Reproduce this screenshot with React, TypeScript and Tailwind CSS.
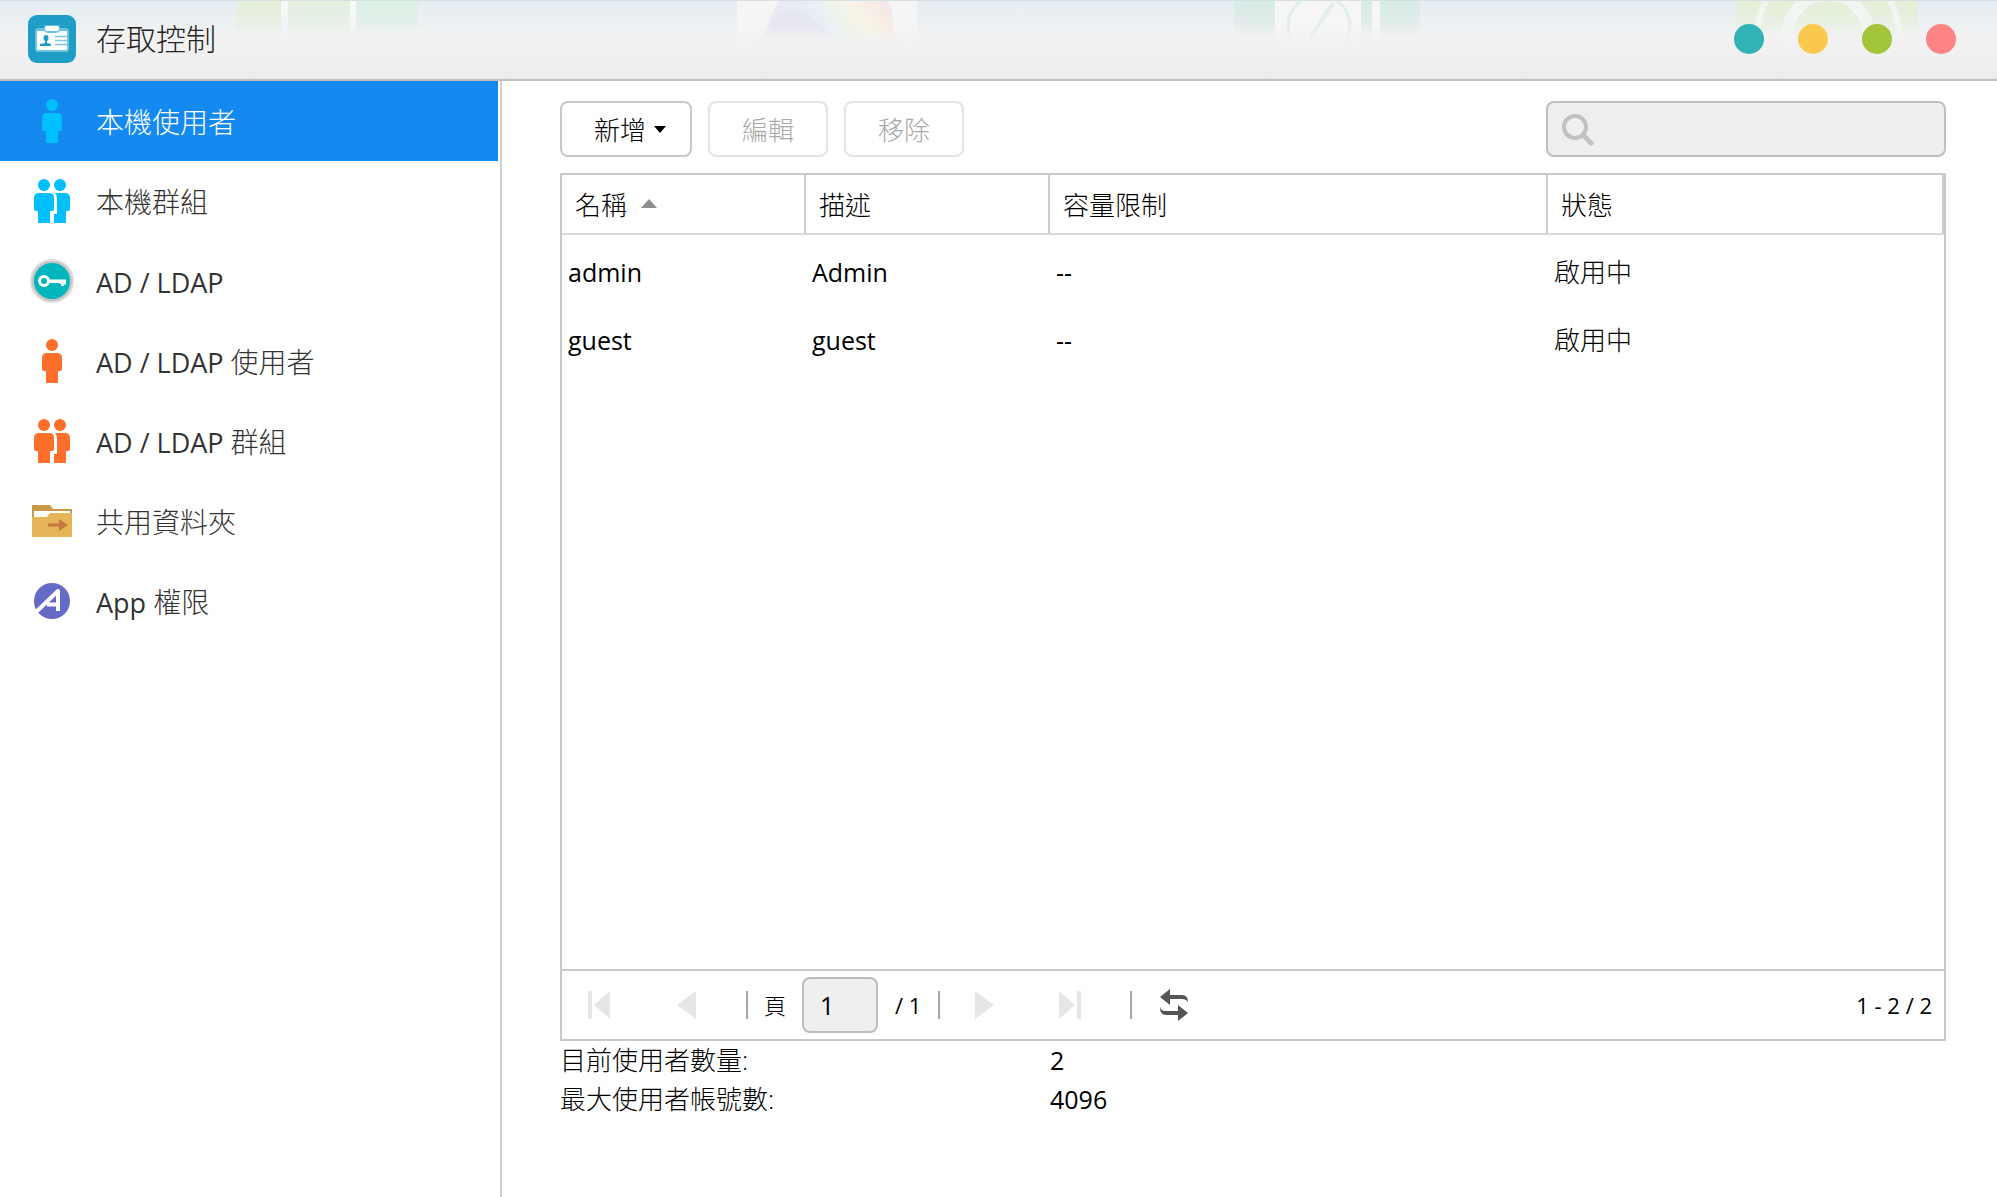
import React from "react";

type IconProps = { color?: string };

function PersonIcon({ color = "#00bfff" }: IconProps) {
  return (
    <svg viewBox="0 0 48 48" className="size-12 shrink-0" fill={color} aria-hidden="true">
      <circle cx="24" cy="8" r="6" />
      <path d="M19 16H29Q34 16 34 21V32Q34 34 31 34H30V46H18V34H17Q14 34 14 32V21Q14 16 19 16Z" />
    </svg>
  );
}

function GroupIcon({ color = "#00bfff" }: IconProps) {
  return (
    <svg viewBox="0 0 48 48" className="size-12 shrink-0" fill={color} aria-hidden="true">
      <circle cx="16" cy="8" r="6" />
      <circle cx="32" cy="8" r="6" />
      <path d="M11 16H21Q26 16 26 21V32Q26 34 23 34H22V46H10V34H9Q6 34 6 32V21Q6 16 11 16Z" />
      <path d="M27 16H37Q42 16 42 21V32Q42 34 39 34H38V46H26V37H29V21Q29 18 27 16Z" />
    </svg>
  );
}

function KeyIcon() {
  return (
    <svg viewBox="0 0 48 48" className="size-12 shrink-0" aria-hidden="true">
      <circle cx="24" cy="24" r="22" fill="#dcdcdc" />
      <circle cx="24" cy="24" r="20" fill="#c3c3c3" />
      <circle cx="24" cy="24" r="18" fill="#00b6bd" />
      <circle cx="16" cy="24" r="4.5" fill="none" stroke="#fff" strokeWidth="3" />
      <path d="M20 22.5H38V27.5H36V29H33V27L31 26H20Z" fill="#fff" />
    </svg>
  );
}

function FolderIcon() {
  return (
    <svg viewBox="0 0 48 48" className="size-12 shrink-0" aria-hidden="true">
      <path d="M4 8H22L25 12H44V20H4Z" fill="#c99a45" />
      <path d="M6 14H42V22H6Z" fill="#fff" />
      <path d="M4 20H18Q19 20 20 18.500L21 17Q22 16 23 16H44V40H4Z" fill="#e6b557" />
      <path d="M20 26.500H31V22L40 28L31 34V29.500H20Z" fill="#c57a45" />
    </svg>
  );
}

function AppIcon() {
  return (
    <svg viewBox="0 0 48 48" className="size-12 shrink-0" aria-hidden="true">
      <circle cx="24" cy="24" r="18" fill="#656ac6" />
      <path d="M8 35L30 14V34M19 27.500H30" fill="none" stroke="#fff" strokeWidth="4" strokeLinejoin="round" />
    </svg>
  );
}

function BadgeIcon() {
  return (
    <svg viewBox="0 0 48 48" className="size-12 shrink-0" aria-hidden="true">
      <rect width="48" height="48" rx="9" fill="#1e9dc6" />
      <rect x="7" y="13" width="34" height="24" rx="3" fill="#6cc3de" />
      <rect x="16" y="10" width="16" height="7" rx="2" fill="#6cc3de" />
      <path d="M9 16H16Q18 18 20 18H28Q30 18 32 16H39V35H9Z" fill="#fff" />
      <rect x="17" y="11" width="14" height="5" rx="2" fill="#fff" />
      <ellipse cx="18" cy="23" rx="2.500" ry="3" fill="#1e9dc6" />
      <path d="M17 25H19V28L23 29V31H12V29L17 28Z" fill="#1e9dc6" />
      <path d="M27 21.500H39M27 25.500H39M27 29.500H39" stroke="#7cc6de" strokeWidth="1.500" />
    </svg>
  );
}

function HeaderBackdrop() {
  return (
    <svg
      viewBox="0 0 1997 79"
      preserveAspectRatio="xMidYMin slice"
      className="absolute inset-0 size-full"
      aria-hidden="true"
    >
      <defs>
        <linearGradient id="fade" x1="0" y1="0" x2="0" y2="1">
          <stop offset="0" stopColor="#fff" />
          <stop offset="0.300" stopColor="#ccc" />
          <stop offset="1" stopColor="#000" />
        </linearGradient>
        <mask id="fadeMask" maskUnits="userSpaceOnUse" x="0" y="0" width="1997" height="40">
          <rect width="1997" height="40" fill="url(#fade)" />
        </mask>
        <linearGradient id="rainbow" gradientUnits="userSpaceOnUse" x1="805" y1="40" x2="880" y2="-10">
          <stop offset="0" stopColor="#e6e6f2" />
          <stop offset="0.250" stopColor="#e0ecf8" />
          <stop offset="0.450" stopColor="#eaf3e8" />
          <stop offset="0.650" stopColor="#f8f3e0" />
          <stop offset="0.850" stopColor="#f8e8e0" />
          <stop offset="1" stopColor="#f5e0e2" />
        </linearGradient>
      </defs>
      <g mask="url(#fadeMask)">
        <rect x="237" width="44" height="40" fill="#e5efd8" />
        <rect x="288" width="62" height="40" fill="#e4f0de" />
        <rect x="356" width="62" height="40" fill="#dcf0e4" />
        <rect x="281" width="7" height="40" fill="#f8fafa" />
        <rect x="350" width="6" height="40" fill="#f8fafa" />
        <rect x="1234" width="186" height="40" fill="#d8ebe5" />
        <rect x="1736" width="182" height="40" fill="#e3f0d5" />
      </g>
      <rect x="737" width="180" height="50" fill="#f5f5f5" />
      <path d="M780 0H888Q894 15 893 34L898 38V46H758V36H764Q770 14 780 0Z" fill="url(#rainbow)" opacity="0.700" />
      <path d="M766 40Q775 5 798 10Q812 14 842 46H758Z" fill="#e6e5ee" opacity="0.700" />
      <rect x="758" y="36" width="140" height="10" fill="#ededed" opacity="0.700" />
      <rect x="1275" width="86" height="50" fill="#f6f6f6" />
      <rect x="1372" width="8" height="50" fill="#f6f6f6" />
      <g fill="none" stroke="#e2eeea" strokeWidth="3">
        <circle cx="1319" cy="26" r="31" />
        <path d="M1310 38L1333 3" strokeWidth="4" />
      </g>
      <g fill="none" stroke="#f3f5f2">
        <circle cx="1828" cy="36" r="41" strokeWidth="12" />
        <circle cx="1828" cy="36" r="71" strokeWidth="6" />
      </g>
      <defs>
        <linearGradient id="bottomShade" x1="0" y1="0" x2="0" y2="1">
          <stop offset="0" stopColor="#f2f2f2" stopOpacity="0" />
          <stop offset="0.300" stopColor="#f2f2f2" />
          <stop offset="1" stopColor="#ececec" />
        </linearGradient>
      </defs>
      <rect y="26" width="1997" height="53" fill="url(#bottomShade)" />
      <rect width="1997" height="1" fill="#d4e0e2" />
    </svg>
  );
}

const navItems = [
  { latin: "", label: "本機使用者", icon: <PersonIcon />, active: true },
  { latin: "", label: "本機群組", icon: <GroupIcon /> },
  { latin: "AD / LDAP", label: "", icon: <KeyIcon /> },
  { latin: "AD / LDAP ", label: "使用者", icon: <PersonIcon color="#ff6f2c" /> },
  { latin: "AD / LDAP ", label: "群組", icon: <GroupIcon color="#ff6f2c" /> },
  { latin: "", label: "共用資料夾", icon: <FolderIcon /> },
  { latin: "App ", label: "權限", icon: <AppIcon /> },
];

const windowButtons = [
  { label: "說明", color: "bg-[#30b3b5]" },
  { label: "最小化", color: "bg-[#fbc84f]" },
  { label: "最大化", color: "bg-[#a2c43a]" },
  { label: "關閉", color: "bg-[#fd8384]" },
];

const users = [
  { name: "admin", description: "Admin", quota: "--", status: "啟用中" },
  { name: "guest", description: "guest", quota: "--", status: "啟用中" },
];

function PagerButton({ label, disabled, children }: { label: string; disabled?: boolean; children: React.ReactNode }) {
  return (
    <button type="button" aria-label={label} disabled={disabled} className="flex size-12 items-center justify-center">
      <svg viewBox="0 0 32 32" className="size-8" fill={disabled ? "#e6e6e6" : "#555"} aria-hidden="true">
        {children}
      </svg>
    </button>
  );
}

function Separator() {
  return <span className="h-7 w-0.5 bg-[#a9a79c]" />;
}

export default function App() {
  return (
    <div className="flex min-h-screen flex-col bg-white font-['Open_Sans','Noto_Sans_CJK_TC',sans-serif] text-[25px] font-normal text-black">
      <header className="relative flex h-[81px] shrink-0 items-center justify-between border-b-2 border-[#c0c0c0] bg-linear-to-b from-[#e5edf2] via-[#f2f2f2] to-[#ececec] pr-[41px] pb-0.5 pl-7">
        <HeaderBackdrop />
        <div className="relative flex items-center gap-5">
          <BadgeIcon />
          <h1 className="text-[30px] leading-10 font-light text-[#222]">存取控制</h1>
        </div>
        <div className="relative flex gap-[34px]">
          {windowButtons.map((b) => (
            <button key={b.label} type="button" aria-label={b.label} className={`size-[30px] rounded-full ${b.color}`} />
          ))}
        </div>
      </header>

      <div className="flex flex-1">
        <nav className="w-[502px] shrink-0 border-r-2 border-[#cfcfcf] pr-0.5">
          <ul>
            {navItems.map((item) => (
              <li key={item.latin + item.label}>
                <a
                  href="#"
                  aria-current={item.active ? "page" : undefined}
                  className={`flex h-20 items-center gap-5 pl-7 text-[28px] leading-10 font-light ${
                    item.active ? "bg-[#148af0] text-white" : "text-[#333]"
                  }`}
                >
                  {item.icon}
                  <span className="pt-0.5 whitespace-pre">
                    {item.latin && <span className="text-[27px] font-normal">{item.latin}</span>}
                    {item.label}
                  </span>
                </a>
              </li>
            ))}
          </ul>
        </nav>

        <main className="flex min-w-0 flex-1 flex-col pt-5 pr-[51px] pb-[78px] pl-[58px]">
          <div className="flex items-center gap-4">
            <button
              type="button"
              className="flex h-14 w-[132px] items-center justify-center gap-2 rounded-lg border-2 border-[#c8c8c8] pt-0.5 pl-2 text-[26px] font-light"
            >
              新增
              <svg viewBox="0 0 12 8" className="h-2 w-3" aria-hidden="true">
                <path d="M0 0H12L6 7Z" />
              </svg>
            </button>
            <button type="button" disabled className="h-14 w-[120px] rounded-lg border-2 border-[#e4e4e4] pt-0.5 text-[26px] font-light text-[#a8a8a8]">
              編輯
            </button>
            <button type="button" disabled className="h-14 w-[120px] rounded-lg border-2 border-[#e4e4e4] pt-0.5 text-[26px] font-light text-[#a8a8a8]">
              移除
            </button>
            <label className="ml-auto flex h-14 w-[400px] items-center rounded-lg border-2 border-[#bfbfbf] bg-[#efefef] pt-0.5 pl-3.5">
              <svg viewBox="0 0 32 32" className="size-8 shrink-0" fill="none" stroke="#bfc3c6" aria-hidden="true">
                <circle cx="13" cy="13" r="11" strokeWidth="4" />
                <path d="M22 22L29 29" strokeWidth="5" strokeLinecap="round" />
              </svg>
              <input type="search" aria-label="搜尋" className="min-w-0 flex-1 px-2 outline-none" />
            </label>
          </div>

          <section className="mt-4 flex flex-1 flex-col border-2 border-[#c9c9c9]">
            <div className="flex-1">
              <table className="w-full table-fixed border-separate border-spacing-0 text-left">
                <colgroup>
                  <col className="w-[244px]" />
                  <col className="w-[244px]" />
                  <col className="w-[498px]" />
                  <col />
                </colgroup>
                <thead>
                  <tr className="h-[60px] text-[26px] leading-9 *:border-r-2 *:border-b-2 *:border-[#cdcdcd] *:border-b-[#dadada] *:px-[13px] *:pt-0.5 *:font-light">
                    <th scope="col" aria-sort="ascending">
                      <div className="flex items-center gap-3.5">
                        名稱
                        <svg viewBox="0 0 16 9" className="mb-1 h-[9px] w-4" fill="#8e8e8e" aria-hidden="true">
                          <path d="M0 9L8 0L16 9Z" />
                        </svg>
                      </div>
                    </th>
                    <th scope="col">描述</th>
                    <th scope="col">容量限制</th>
                    <th scope="col">狀態</th>
                  </tr>
                </thead>
                <tbody>
                  {users.map((u) => (
                    <tr key={u.name} className="h-[68px] *:px-1.5">
                      <td className="pt-2">{u.name}</td>
                      <td className="pt-2">{u.description}</td>
                      <td className="pt-2">{u.quota}</td>
                      <td className="pt-1.5 text-[26px] font-light">{u.status}</td>
                    </tr>
                  ))}
                </tbody>
              </table>
            </div>

            <div className="flex h-[70px] items-center border-t-2 border-[#c9c9c9] px-3 text-[22px]">
              <PagerButton label="第一頁" disabled>
                <path d="M6 2H10V30H6ZM28 2V30L12 16Z" />
              </PagerButton>
              <div className="ml-10 flex">
                <PagerButton label="上一頁" disabled>
                  <path d="M26 2V30L7 16Z" />
                </PagerButton>
              </div>
              <div className="ml-9 flex items-center">
                <Separator />
                <label className="flex items-center gap-4 pl-4">
                  <span className="font-light">頁</span>
                  <input
                    type="text"
                    defaultValue="1"
                    className="h-14 w-[76px] rounded-lg border-2 border-[#bdbdbd] bg-[#efefef] px-4 text-[25px]"
                  />
                </label>
                <span className="px-[17px]">/ 1</span>
                <Separator />
              </div>
              <div className="ml-5 flex gap-[38px]">
                <PagerButton label="下一頁" disabled>
                  <path d="M7 2V30L26 16Z" />
                </PagerButton>
                <PagerButton label="最後一頁" disabled>
                  <path d="M5 2V30L21 16ZM23 2H27V30H23Z" />
                </PagerButton>
              </div>
              <div className="ml-9 flex items-center gap-[18px]">
                <Separator />
                <PagerButton label="重新整理">
                  <path d="M2 8L12 0V6H24Q30 6 30 13Q28 10 24 10H12V16ZM30 24L20 16V22H8Q2 22 2 17V19Q2 26 8 26H20V32Z" />
                </PagerButton>
              </div>
              <span className="ml-auto">1 - 2 / 2</span>
            </div>
          </section>

          <dl className="grid grid-cols-[490px_1fr] leading-[39px]">
            <dt className="text-[26px] font-light">目前使用者數量:</dt>
            <dd>2</dd>
            <dt className="text-[26px] font-light">最大使用者帳號數:</dt>
            <dd>4096</dd>
          </dl>
        </main>
      </div>
    </div>
  );
}
